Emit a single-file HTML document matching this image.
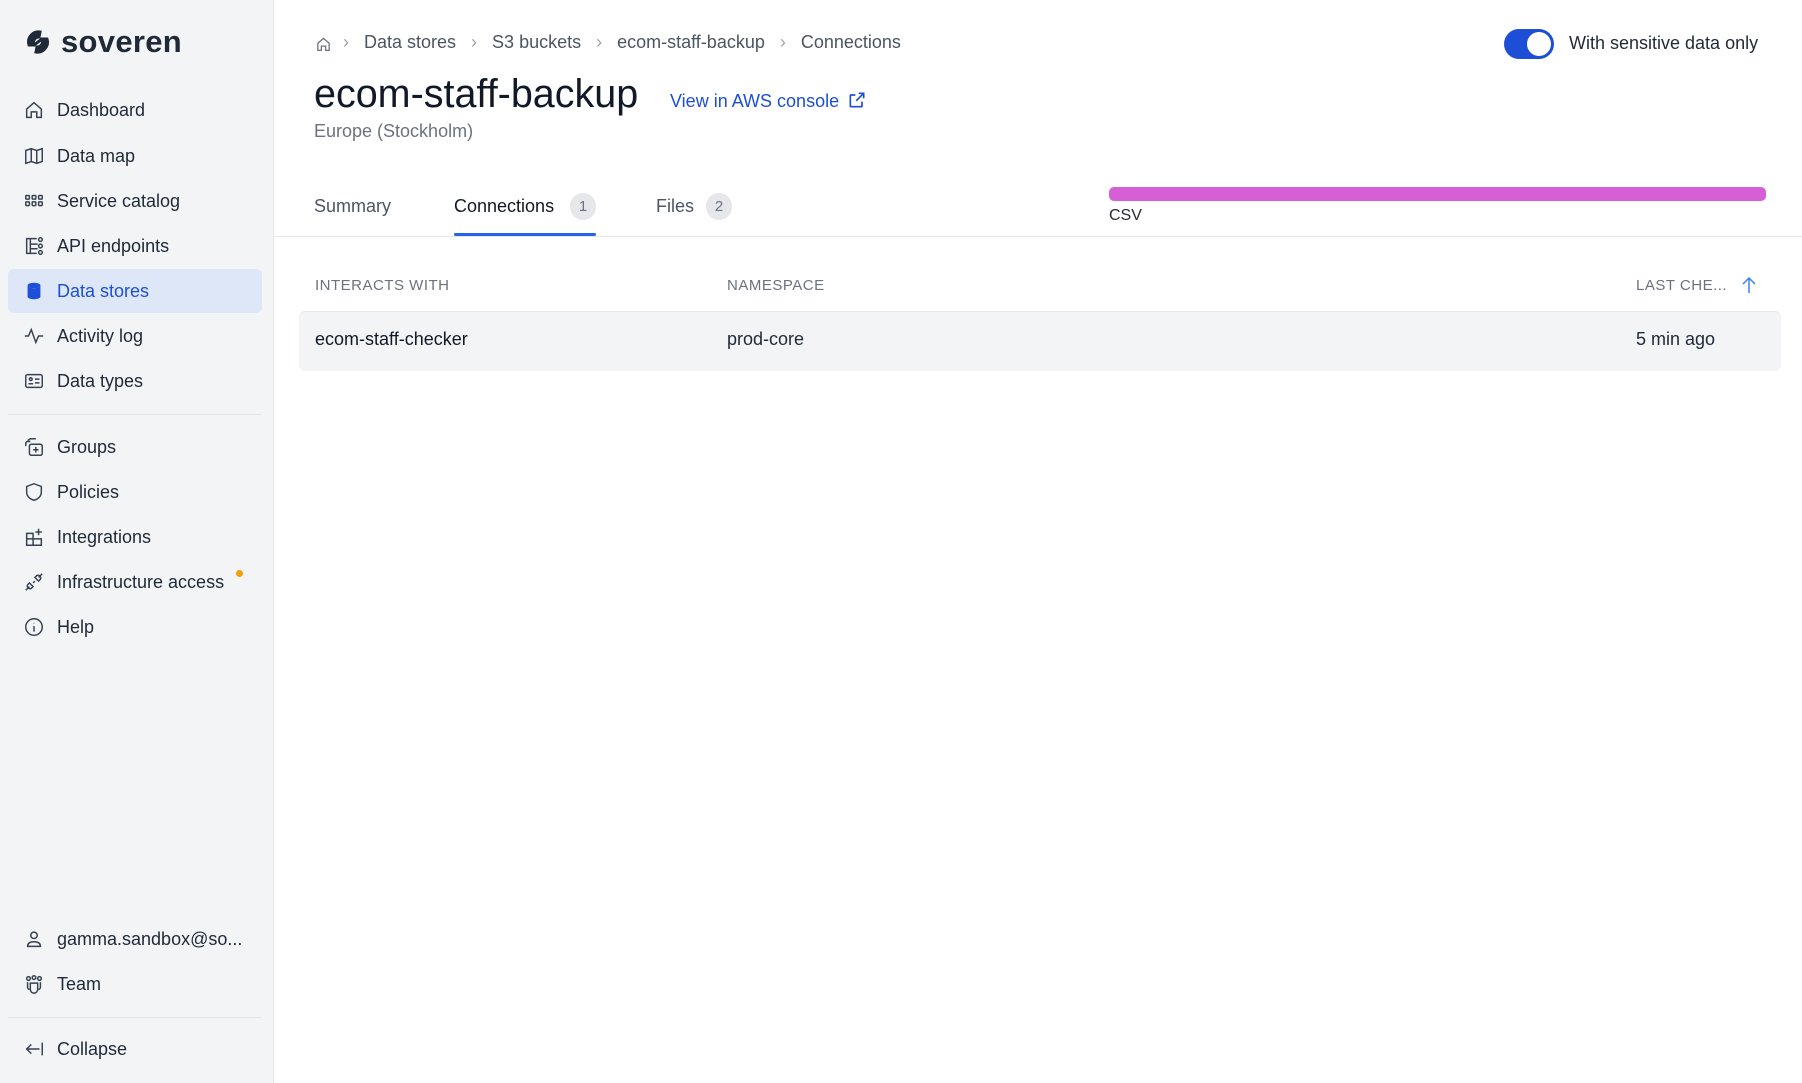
<!DOCTYPE html>
<html><head><meta charset="utf-8"><style>
*{box-sizing:border-box;margin:0;padding:0}
body{width:1802px;height:1083px;overflow:hidden;background:#fff;font-family:"Liberation Sans",sans-serif;color:#1f2937;position:relative}
.sb{position:absolute;left:0;top:0;width:274px;height:1083px;background:#f3f4f6;border-right:1px solid #e5e7eb}
.logo{position:absolute;left:25px;top:24px;display:flex;align-items:center;gap:10px;font-size:31px;font-weight:bold;color:#1f2937;letter-spacing:0.3px}
.it{position:absolute;left:8px;width:254px;height:44px;display:flex;align-items:center;padding-left:15px;font-size:18px;color:#1f2937;border-radius:6px}
.it svg{width:22px;height:22px;margin-right:12px;flex:none}
.act{background:#dde7f8;color:#1d4ed8}
.div{position:absolute;left:8px;width:254px;height:1px;background:#e5e7eb}
.a{position:absolute;white-space:nowrap}
.bc{font-size:18px;color:#4b5563;top:32px}
.chev{color:#9ca3af}
</style></head><body>
<div class="sb">
 <div class="logo"><svg width="26" height="26" viewBox="0 0 26 26"><path d="M15 3 A10 10 0 0 0 4 16 L9 16 A5.5 5.5 0 0 1 14 8 Z M11 23 A10 10 0 0 0 22 10 L17 10 A5.5 5.5 0 0 1 12 18 Z M9 16 L17 10" fill="#1f2937" stroke="#1f2937" stroke-width="3"/></svg><span>soveren</span></div>
 <div class="it" style="top:88px"><svg viewBox="0 0 24 24" fill="none" stroke="#374151" stroke-width="1.6"><path d="M4 11l8-7 8 7v9h-5v-6h-6v6H4z"/></svg>Dashboard</div>
 <div class="it" style="top:134px"><svg viewBox="0 0 24 24" fill="none" stroke="#374151" stroke-width="1.6"><path d="M3 6l6-2 6 2 6-2v14l-6 2-6-2-6 2zM9 4v14M15 6v14"/></svg>Data map</div>
 <div class="it" style="top:179px"><svg viewBox="0 0 24 24" fill="none" stroke="#374151" stroke-width="1.6"><rect x="3" y="6" width="4" height="4" rx="1"/><rect x="10" y="6" width="4" height="4" rx="1"/><rect x="17" y="6" width="4" height="4" rx="1"/><rect x="3" y="13" width="4" height="4" rx="1"/><rect x="10" y="13" width="4" height="4" rx="1"/><rect x="17" y="13" width="4" height="4" rx="1"/></svg>Service catalog</div>
 <div class="it" style="top:224px"><svg viewBox="0 0 24 24" fill="none" stroke="#374151" stroke-width="1.6"><path d="M15 4H4v16h11M8 4v16M8 10h8M8 15h8"/><circle cx="19" cy="5" r="2"/><circle cx="19" cy="12" r="2"/><circle cx="19" cy="19" r="2"/></svg>API endpoints</div>
 <div class="it act" style="top:269px"><svg viewBox="0 0 24 24"><ellipse cx="12" cy="6" rx="7" ry="3" fill="#1d4ed8"/><path d="M5 6v12c0 1.7 3 3 7 3s7-1.3 7-3V6c0 1.7-3 3-7 3S5 7.7 5 6z" fill="#1d4ed8"/></svg>Data stores</div>
 <div class="it" style="top:314px"><svg viewBox="0 0 24 24" fill="none" stroke="#374151" stroke-width="1.6"><path d="M2 12h4l3-7 5 14 3-7h5"/></svg>Activity log</div>
 <div class="it" style="top:359px"><svg viewBox="0 0 24 24" fill="none" stroke="#374151" stroke-width="1.6"><rect x="3" y="5" width="18" height="14" rx="2"/><circle cx="8.5" cy="10" r="1.5"/><path d="M6 15h5M13 10h5M13 14h5"/></svg>Data types</div>
 <div class="div" style="top:414px"></div>
 <div class="it" style="top:425px"><svg viewBox="0 0 24 24" fill="none" stroke="#374151" stroke-width="1.6"><path d="M8 6H5a2 2 0 0 0-2 2v3"/><rect x="7" y="9" width="14" height="12" rx="2"/><path d="M14 12v6M11 15h6M5 5l3-2h6"/></svg>Groups</div>
 <div class="it" style="top:470px"><svg viewBox="0 0 24 24" fill="none" stroke="#374151" stroke-width="1.6"><path d="M12 3l8 3v6c0 5-4 8-8 9-4-1-8-4-8-9V6z"/></svg>Policies</div>
 <div class="it" style="top:515px"><svg viewBox="0 0 24 24" fill="none" stroke="#374151" stroke-width="1.6"><path d="M4 8h7v13H4zM11 14h9v7h-9M4 14h7M17 3v7M13.5 6.5h7"/></svg>Integrations</div>
 <div class="it" style="top:560px"><svg viewBox="0 0 24 24" fill="none" stroke="#374151" stroke-width="1.6"><path d="M3 21l4-4M7 13l4 4-2 2a3 3 0 0 1-4-4zM13 11l-2 2M17 11l-4-4 2-2a3 3 0 0 1 4 4zM17 7l4-4"/></svg>Infrastructure access<span style="position:absolute;left:228px;top:10px;width:7px;height:7px;border-radius:50%;background:#f59e0b"></span></div>
 <div class="it" style="top:605px"><svg viewBox="0 0 24 24" fill="none" stroke="#374151" stroke-width="1.6"><circle cx="12" cy="12" r="9"/><path d="M12 11v6M12 7.5v.5"/></svg>Help</div>
 <div class="it" style="top:917px"><svg viewBox="0 0 24 24" fill="none" stroke="#374151" stroke-width="1.6"><circle cx="12" cy="8" r="3.5"/><path d="M5 20c0-4 3-5 7-5s7 1 7 5z"/></svg>gamma.sandbox@so...</div>
 <div class="it" style="top:962px"><svg viewBox="0 0 24 24" fill="none" stroke="#374151" stroke-width="1.6"><circle cx="6" cy="6" r="2"/><circle cx="12" cy="5" r="2"/><circle cx="18" cy="6" r="2"/><path d="M8 11h8v7a4 4 0 0 1-8 0zM5 10v6a3 3 0 0 0 2 2M19 10v6a3 3 0 0 1-2 2"/></svg>Team</div>
 <div class="div" style="top:1017px"></div>
 <div class="it" style="top:1027px"><svg viewBox="0 0 24 24" fill="none" stroke="#374151" stroke-width="1.6"><path d="M18 12H4M9 7l-5 5 5 5M21 5v14"/></svg>Collapse</div>
</div>

<svg class="a" style="left:315px;top:35px" width="17" height="18" viewBox="0 0 24 24" fill="none" stroke="#6b7280" stroke-width="1.8"><path d="M4 11l8-7 8 7v10h-5v-6h-6v6H4z"/></svg>
<div class="a bc" style="left:343px"><span class="chev">›</span>&nbsp;&nbsp; Data stores &nbsp;&nbsp;<span class="chev">›</span>&nbsp;&nbsp; S3 buckets &nbsp;&nbsp;<span class="chev">›</span>&nbsp;&nbsp; ecom-staff-backup &nbsp;&nbsp;<span class="chev">›</span>&nbsp;&nbsp; Connections</div>

<div class="a" style="left:1504px;top:29px;width:50px;height:30px;border-radius:15px;background:#1d4ed8"><div style="position:absolute;right:3px;top:3px;width:24px;height:24px;border-radius:50%;background:#fff"></div></div>
<div class="a" style="left:1569px;top:33px;font-size:18px;color:#1f2937">With sensitive data only</div>

<div class="a" style="left:314px;top:72px;font-size:39.5px;color:#111827">ecom-staff-backup</div>
<div class="a" style="left:670px;top:90px;font-size:18px;color:#1d4ed8">View in AWS console <svg width="20" height="20" viewBox="0 0 24 24" fill="none" stroke="#1d4ed8" stroke-width="2" style="vertical-align:-3px;margin-left:3px"><path d="M14 4h6v6M20 4l-9 9M18 14v5a1 1 0 0 1-1 1H5a1 1 0 0 1-1-1V7a1 1 0 0 1 1-1h5"/></svg></div>
<div class="a" style="left:314px;top:121px;font-size:18px;color:#6b7280">Europe (Stockholm)</div>

<div class="a" style="left:314px;top:196px;font-size:18px;color:#4b5563">Summary</div>
<div class="a" style="left:454px;top:196px;font-size:18px;color:#111827">Connections</div>
<div class="a" style="left:570px;top:193px;width:26px;height:27px;border-radius:13px;background:#e5e7eb;font-size:15px;color:#6b7280;text-align:center;line-height:27px">1</div>
<div class="a" style="left:656px;top:196px;font-size:18px;color:#4b5563">Files</div>
<div class="a" style="left:706px;top:193px;width:26px;height:27px;border-radius:13px;background:#e5e7eb;font-size:15px;color:#6b7280;text-align:center;line-height:27px">2</div>
<div class="a" style="left:454px;top:233px;width:142px;height:3px;background:#2563eb;border-radius:2px"></div>
<div class="a" style="left:274px;top:236px;width:1528px;height:1px;background:#e5e7eb"></div>

<div class="a" style="left:1109px;top:187px;width:657px;height:14px;border-radius:5px;background:#d65fd6"></div>
<div class="a" style="left:1109px;top:207px;font-size:16px;color:#1f2937">CSV</div>

<div class="a" style="left:315px;top:277px;font-size:15px;color:#6b7280;letter-spacing:0.5px">INTERACTS WITH</div>
<div class="a" style="left:727px;top:277px;font-size:15px;color:#6b7280;letter-spacing:0.5px">NAMESPACE</div>
<div class="a" style="left:1636px;top:277px;font-size:15px;color:#6b7280;letter-spacing:0.5px">LAST CHE...</div>
<svg class="a" style="left:1740px;top:275px" width="18" height="20" viewBox="0 0 18 20" fill="none" stroke="#3b82f6" stroke-width="1.5"><path d="M9 18V3M3 9l6-6 6 6"/></svg>

<div class="a" style="left:299px;top:311px;width:1482px;height:60px;background:#f3f4f6;border-radius:6px;border-top:1px solid #e5e7eb"></div>
<div class="a" style="left:315px;top:329px;font-size:18px;color:#111827">ecom-staff-checker</div>
<div class="a" style="left:727px;top:329px;font-size:18px;color:#1f2937">prod-core</div>
<div class="a" style="left:1636px;top:329px;font-size:18px;color:#1f2937">5 min ago</div>
</body></html>
